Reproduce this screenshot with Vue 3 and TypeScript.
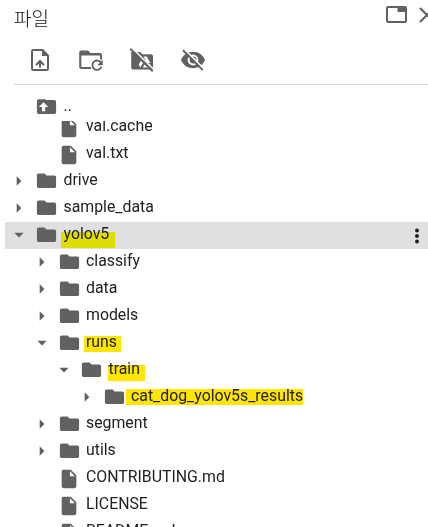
<script setup lang="ts">
interface Row {
  name: string
  depth: number
  kind: 'folder' | 'file'
  open?: boolean
  selected?: boolean
  mark?: string
}

const rows: Row[] = [
  { name: 'val.cache', depth: 1, kind: 'file' },
  { name: 'val.txt', depth: 1, kind: 'file' },
  { name: 'drive', depth: 0, kind: 'folder' },
  { name: 'sample_data', depth: 0, kind: 'folder' },
  { name: 'yolov5', depth: 0, kind: 'folder', open: true, selected: true, mark: 'mark-root' },
  { name: 'classify', depth: 1, kind: 'folder' },
  { name: 'data', depth: 1, kind: 'folder' },
  { name: 'models', depth: 1, kind: 'folder' },
  { name: 'runs', depth: 1, kind: 'folder', open: true, mark: 'mark-runs' },
  { name: 'train', depth: 2, kind: 'folder', open: true, mark: 'mark-train' },
  { name: 'cat_dog_yolov5s_results', depth: 3, kind: 'folder', mark: 'mark-results' },
  { name: 'segment', depth: 1, kind: 'folder' },
  { name: 'utils', depth: 1, kind: 'folder' },
  { name: 'CONTRIBUTING.md', depth: 1, kind: 'file' },
  { name: 'LICENSE', depth: 1, kind: 'file' },
  { name: 'README.md', depth: 1, kind: 'file' },
]
</script>

<template>
  <section class="panel">
    <header class="header">
      <h1 class="title">파일</h1>
      <div class="window-actions">
        <svg class="tab-icon" viewBox="0 0 21 17">
          <rect x="1" y="1" width="19" height="15" rx="1" fill="none" stroke="currentColor" stroke-width="2" />
          <path d="M11.5 1H20v5h-8.5z" fill="currentColor" />
        </svg>
        <svg class="close-icon" viewBox="0 0 16 16">
          <path d="M1 1l14 14M15 1L1 15" stroke="currentColor" stroke-width="2.1" />
        </svg>
      </div>
    </header>

    <nav class="toolbar">
      <svg class="tool" viewBox="0 0 26 26">
        <path fill-rule="evenodd" fill="currentColor" d="M6.200 2H16l6 6v13.800a2.200 2.200 0 0 1-2.200 2.200H6.200A2.200 2.200 0 0 1 4 21.800V4.200A2.200 2.200 0 0 1 6.200 2zM6 4v18h14V9h-5V4z" />
        <path fill="currentColor" d="M12 20.500v-4l-2.300 2.200-1.400-1.400L13 12.500l4.700 4.800-1.400 1.400-2.300-2.200v4z" />
      </svg>
      <svg class="tool" viewBox="0 0 26 26">
        <path fill="currentColor" d="M3.200 3.500h7L12.500 6H22a2 2 0 0 1 2 2v4.500h-2V8.500H3.300V20H13v2H3.200A2 2 0 0 1 1.200 20V5.500a2 2 0 0 1 2-2z" />
        <path fill="none" stroke="currentColor" stroke-width="1.800" d="M23.100 15.800A4.700 4.700 0 1 0 23.500 19.700" />
        <path fill="currentColor" d="M24.700 12.800v5.500h-5.500z" />
      </svg>
      <svg class="tool" viewBox="0 0 26 26">
        <path fill="currentColor" d="M2.200 5h9l2.300 2.200H22a2 2 0 0 1 2 2V21a2 2 0 0 1-1 1.500H4.200a2 2 0 0 1-2-2z" />
        <path fill="#fff" d="M14.500 9.500h3.200l3.800 6.600h-3.300zM13.300 11.300l1.700 2.900-3.700 6.200-1.600-2.800zM15.500 17.500h6.200l-1.700 3h-6.200z" />
        <path d="M2.600 .5l22.500 22.500" stroke="#fff" stroke-width="1.500" />
        <path d="M1.300 1.800l22.500 22.500" stroke="currentColor" stroke-width="2" />
      </svg>
      <svg class="tool" viewBox="0 0 26 26">
        <path fill="currentColor" d="M13 4.800C7.500 4.800 3 8.100 1 13c2 4.900 6.500 8.200 12 8.200s10-3.300 12-8.200C23 8.100 18.500 4.800 13 4.800z" />
        <circle cx="13" cy="13" r="4.400" fill="currentColor" stroke="#fff" stroke-width="2" />
        <path d="M4.200 2.200l20 20" stroke="#fff" stroke-width="1.800" />
        <path d="M3 3.300l19.800 19.800" stroke="currentColor" stroke-width="2" />
      </svg>
    </nav>

    <div class="tree">
      <div class="row">
        <span class="arrow"></span>
        <svg class="icon" viewBox="0 0 24 24" preserveAspectRatio="none">
          <path fill-rule="evenodd" fill="currentColor" d="M20 4.500h-8l-1.500-1H4c-1.100 0-2 .9-2 2v12.500c0 1.100.9 2 2 2h16c1.100 0 2-.9 2-2V6.500c0-1.100-.9-2-2-2zM7.300 17v-4.800H4L9 7l5 5.200h-3.300V17z" />
        </svg>
        <span class="name">..</span>
      </div>
      <div class="list">
        <div v-for="row in rows" :key="row.name" class="row" :class="['depth-' + row.depth, { selected: row.selected }]">
          <span class="arrow">
            <svg v-if="row.kind === 'folder'" class="caret" viewBox="0 0 10 10">
              <path v-if="row.open" fill="currentColor" d="M.3 2.700h9.400L5 7.400z" />
              <path v-else fill="currentColor" d="M2.700.3v9.400L7.400 5z" />
            </svg>
          </span>
          <svg v-if="row.kind === 'folder'" class="icon" viewBox="0 0 24 24" preserveAspectRatio="none">
            <path fill="currentColor" d="M10 4H4c-1.100 0-2 .9-2 2v12c0 1.100.9 2 2 2h16c1.100 0 2-.9 2-2V8c0-1.100-.9-2-2-2h-8z" />
          </svg>
          <svg v-else class="icon file" viewBox="0 0 24 24">
            <path fill="currentColor" d="M6 2c-1.100 0-2 .9-2 2v16c0 1.100.9 2 2 2h12c1.100 0 2-.9 2-2V8l-6-6zm7 7V3.500L18.500 9z" />
          </svg>
          <span class="name">{{ row.name }}<i v-if="row.mark" class="mark" :class="row.mark"></i></span>
          <svg v-if="row.selected" class="more" viewBox="0 0 6 18">
            <circle cx="3" cy="3.500" r="2" />
            <circle cx="3" cy="9" r="2" />
            <circle cx="3" cy="14.500" r="2" />
          </svg>
        </div>
      </div>
    </div>
  </section>
</template>

<style>
body {
  overflow: hidden;
  background: #fff;
}
</style>

<style scoped>
.panel {
  box-sizing: border-box;
  width: 428px;
  height: 527px;
  overflow: hidden;
  display: flex;
  flex-direction: column;
  color: #616161;
  background: #fff;
  font-family: Roboto, "Noto Sans CJK KR", sans-serif;
}
.header {
  flex: none;
  height: 39px;
  display: flex;
  justify-content: space-between;
  padding-left: 14px;
}
.title {
  margin: 4px 0 0;
  font: 300 19px/27px "Noto Sans CJK KR", sans-serif;
  color: #111;
}
.window-actions {
  display: flex;
  gap: 12px;
  padding-top: 6px;
  margin-right: -7px;
}
.tab-icon {
  width: 21px;
  height: 17px;
}
.close-icon {
  width: 16px;
  height: 16px;
  margin-top: 1px;
}
.toolbar {
  flex: none;
  box-sizing: border-box;
  height: 46px;
  display: flex;
  gap: 25px;
  margin-left: 14px;
  padding: 8px 0 0 13px;
  border-bottom: 1px solid #d8d8d8;
}
.tool {
  width: 26px;
  height: 26px;
}
.tree {
  flex: 1;
  min-height: 0;
  display: flex;
  flex-direction: column;
  padding: 9px 0 0 5px;
}
.list {
  flex: 1;
  min-height: 0;
  overflow: hidden;
  display: flex;
  flex-direction: column;
}
.list .row:first-child {
  margin-top: -7px;
}
.row {
  flex: none;
  box-sizing: border-box;
  height: 27px;
  display: flex;
  align-items: center;
}
.depth-1 { padding-left: 22.500px; }
.depth-2 { padding-left: 45px; }
.depth-3 { padding-left: 67.500px; }
.selected { background: #e0e0e0; }
.arrow {
  width: 30px;
  display: flex;
  padding: 0 0 1px 9px;
  box-sizing: border-box;
}
.caret {
  width: 10px;
  height: 10px;
}
.icon {
  width: 23px;
  height: 21.500px;
  margin-bottom: 1px;
  flex: none;
}
.file {
  width: 22px;
  height: 22px;
  margin: 0 .500px 0 .500px;
}
.name {
  position: relative;
  margin-left: 5.500px;
  font-size: 15.850px;
  line-height: 25px;
  color: #212121;
  white-space: nowrap;
  padding-bottom: 4px;
}
.mark {
  position: absolute;
  height: 16px;
  background: #ffe600;
  mix-blend-mode: multiply;
}
.mark-root { left: -3px; top: 11px; width: 54.500px; background: #fffc00; }
.mark-runs { left: -2px; top: 7px; width: 36.500px; }
.mark-train { left: -1px; top: 9px; width: 37px; }
.mark-results { left: -5.500px; top: 6px; width: 177.500px; }
.more {
  width: 6px;
  height: 18px;
  margin: 0 8px 0 auto;
  fill: #212121;
}
</style>
